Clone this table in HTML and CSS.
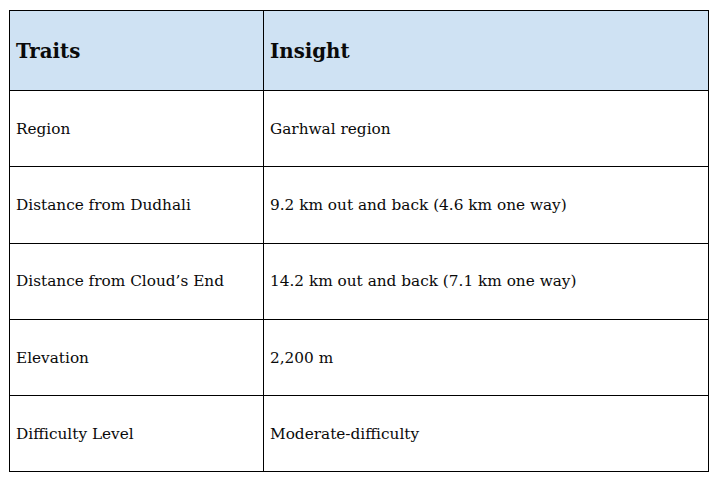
FILE: index.html
```html
<!DOCTYPE html>
<html>
<head>
<meta charset="utf-8">
<link rel="stylesheet" href="styles.css">
</head>
<body>
<table class="traits">
  <thead>
    <tr><th class="col-a">Traits</th><th>Insight</th></tr>
  </thead>
  <tbody>
    <tr><td>Region</td><td>Garhwal region</td></tr>
    <tr><td>Distance from Dudhali</td><td>9.2 km out and back (4.6 km one way)</td></tr>
    <tr><td>Distance from Cloud’s End</td><td>14.2 km out and back (7.1 km one way)</td></tr>
    <tr><td>Elevation</td><td>2,200 m</td></tr>
    <tr><td>Difficulty Level</td><td>Moderate-difficulty</td></tr>
  </tbody>
</table>
</body>
</html>
```
FILE: styles.css
```css
html, body {
  margin: 0;
  padding: 0;
  background: #ffffff;
}
body {
  padding: 10px 0 0 9px;
  font-family: "DejaVu Serif", "Liberation Serif", serif;
  color: #0a0a0a;
}
.traits {
  border-collapse: collapse;
  width: 700px;
  table-layout: fixed;
}
.traits th,
.traits td {
  border: 1px solid #000000;
  padding: 0 6px;
  text-align: left;
  vertical-align: middle;
}
.traits th {
  background: #cfe2f3;
  height: 79px;
  font-size: 19.8px;
  font-weight: bold;
}
.traits td {
  height: 75.3px;
  font-size: 15.3px;
}
.traits .col-a {
  width: 241px;
}
```
